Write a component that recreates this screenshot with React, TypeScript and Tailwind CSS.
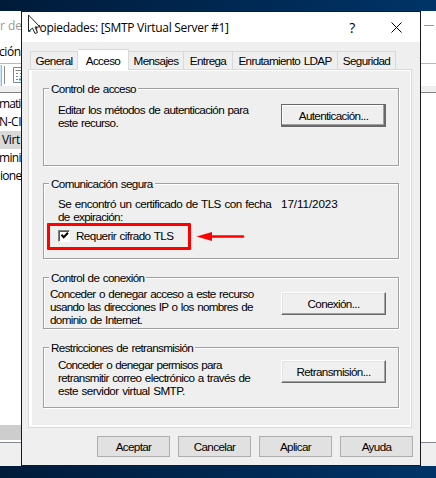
import type { ReactNode } from "react";

function Background() {
  return (
    <div className="flex h-[455px] flex-col bg-white font-['Open_Sans','Noto_Sans',sans-serif] text-[12px] leading-[18px] tracking-[-0.4px]">
      <div className="flex h-[29px] items-center justify-between text-[#999]">
        <span className="tracking-normal whitespace-nowrap">r de</span>
        <span className="mr-[2px] h-px w-[10px] bg-[#999]" />
      </div>
      <div className="-ml-px h-[23px] leading-[24px] whitespace-nowrap">ción</div>
      <div className="flex h-[23px] items-center border-t border-[#b5b7c3]">
        <span className="h-[21px] w-[2px] border-r border-[#7ebdf0] bg-[#cce8ff]" />
        <span className="ml-[2px] h-[18px] w-px bg-[#8a8a8a]" />
        <svg className="ml-[8px]" width="14" height="16" viewBox="0 0 14 16" fill="none" stroke="#7b8790">
          <path d="M.5 .5h13v15H.5z" />
          <path d="M2.500 3.500h9M3 6.500h2M7 6.500h5M3 9.500h2M7 9.500h5M3 12.500h2" />
          <path d="M6 12.500h6" stroke="#00a8e8" strokeWidth="2" />
        </svg>
      </div>
      <div className="h-[7px] border-b border-[#828282] bg-[#efefef]" />
      <div className="h-[332px] pt-[2px]">
        <div className="-ml-px h-[18px] tracking-[-0.9px] whitespace-nowrap">matic</div>
        <div className="-ml-px h-[18px] whitespace-nowrap">N-CI</div>
        <div className="h-[18px] w-[21px] bg-[#d9d9d9] pl-[2px] whitespace-nowrap">Virt</div>
        <div className="-ml-px h-[18px] tracking-[-0.7px] whitespace-nowrap">mini</div>
        <div className="h-[18px] tracking-[-0.7px] whitespace-nowrap">ione</div>
      </div>
      <div className="h-[15px] w-[21px] bg-[#cdcdcd]" />
      <div className="mt-[2px] h-[24px] border-t border-[#828790] bg-[#efefef]" />
    </div>
  );
}

function Group({ title, className, children }: { title: ReactNode; className: string; children: ReactNode }) {
  return (
    <section
      className={
        "ml-[14px] w-[356px] border border-[#a0a0a0] shadow-[1px_1px_0_#fff,inset_1px_1px_0_#fff] " + className
      }
    >
      <div className="-mt-[7px] ml-[5px] flex h-[14px]">
        <h2 className="bg-[#efefef] px-[2px]">{title}</h2>
      </div>
      {children}
    </section>
  );
}

function PushButton({ children, focused }: { children: ReactNode; focused?: boolean }) {
  return (
    <button
      className={
        "h-[23px] w-[105px] shrink-0 border border-r-[#696969] border-b-[#696969] bg-[#efefef] " +
        (focused
          ? "border-t-[#696969] border-l-[#696969] shadow-[inset_-1px_-1px_0_#696969,inset_-2px_-2px_0_#a0a0a0,inset_1px_1px_0_#fff]"
          : "border-t-white border-l-white shadow-[inset_-1px_-1px_0_#a0a0a0,inset_1px_1px_0_#e3e3e3]")
      }
    >
      {children}
    </button>
  );
}

function Tab({ className, children }: { className: string; children: ReactNode }) {
  return (
    <div className={"flex h-[18px] items-center justify-center border-t border-r border-[#d9d9d9] " + className}>
      {children}
    </div>
  );
}

function FooterButton({ children }: { children: ReactNode }) {
  return <button className="h-[21px] w-[73px] border border-[#adadad] bg-[#e1e1e1]">{children}</button>;
}

function Dialog() {
  return (
    <div className="absolute top-[11px] left-[21px] h-[455px] w-[400px] border border-[#1a1a1a] bg-[#efefef] font-['Liberation_Sans',sans-serif] text-[11.7px] leading-[13px] tracking-[-0.65px] [word-spacing:0.9px] whitespace-nowrap text-black">
      <header className="flex h-[30px] items-center bg-white pl-[6px] font-['Open_Sans','Noto_Sans',sans-serif] text-[12px] tracking-[-0.3px] [word-spacing:0px]">
        <span>Propiedades: [SMTP Virtual Server #1]</span>
        <span className="ml-auto text-[14px]">?</span>
        <svg className="mr-[18px] ml-[36px]" width="11" height="11" viewBox="0 0 11 11" stroke="#000">
          <path d="M.5 .5l10 10M10.500 .5l-10 10" />
        </svg>
      </header>
      <nav className="flex h-[27px] items-end pl-[8px]">
        <Tab className="w-[48px] border-l">General</Tab>
        <div className="z-10 -mb-px flex h-[21px] w-[51px] items-center justify-center border-t border-r border-[#d9d9d9] bg-white">
          Acceso
        </div>
        <Tab className="w-[55px]">Mensajes</Tab>
        <Tab className="w-[49px]">Entrega</Tab>
        <Tab className="w-[105px]">Enrutamiento LDAP</Tab>
        <Tab className="w-[58px]">Seguridad</Tab>
      </nav>
      <main className="ml-[6px] h-[359px] w-[384px] border border-[#d9d9d9] shadow-[inset_3px_0_0_#fff,inset_-1px_-2px_0_#fff,inset_0_1px_0_#fff]">
        <Group title="Control de acceso" className="mt-[18px] h-[78px]">
          <div className="flex justify-between pr-[12px] pl-[14px]">
            <p className="mt-[7px]">
              <span className="block">Editar los métodos de autenticación para</span>
              <span className="block">este recurso.</span>
            </p>
            <div className="mt-[8px]">
              <PushButton focused>Autenticación...</PushButton>
            </div>
          </div>
        </Group>
        <Group title="Comunicación segura" className="mt-[17px] h-[76px]">
          <div className="flex pl-[14px]">
            <p className="mt-[6px] w-[223px]">
              <span className="block tracking-[-0.55px]">Se encontró un certificado de TLS con fecha</span>
              <span className="block">de expiración:</span>
            </p>
            <span className="mt-[6px] tracking-[-0.1px]">17/11/2023</span>
          </div>
          <label className="mt-[6px] flex items-center pl-[14px]">
            <span className="flex h-[12px] w-[12px] items-center justify-center border border-t-[#808080] border-r-white border-b-white border-l-[#808080] bg-white shadow-[inset_1px_1px_0_#555]">
              <svg width="9" height="9" viewBox="0 0 9 9" fill="none" stroke="#000" strokeWidth="2">
                <path d="M1.500 3.800l2.200 2.400L8 1.800" />
              </svg>
            </span>
            <span className="ml-[6px] tracking-[-0.6px]">Requerir cifrado TLS</span>
          </label>
        </Group>
        <Group title="Control de conexión" className="mt-[18px] h-[52px]">
          <div className="flex justify-between pr-[12px] pl-[6px]">
            <p className="mt-[2px]">
              <span className="block">Conceder o denegar acceso a este recurso</span>
              <span className="block tracking-[-0.7px]">usando las direcciones IP o los nombres de</span>
              <span className="block">dominio de Internet.</span>
            </p>
            <div className="mt-[7px]">
              <PushButton>Conexión...</PushButton>
            </div>
          </div>
        </Group>
        <Group title="Restricciones de retransmisión" className="mt-[18px] h-[61px]">
          <div className="flex justify-between pr-[12px] pl-[14px]">
            <p className="mt-[3px]">
              <span className="block tracking-[-0.74px]">Conceder o denegar permisos para</span>
              <span className="block">retransmitir correo electrónico a través de</span>
              <span className="block tracking-[-0.55px]">este servidor virtual SMTP.</span>
            </p>
            <div className="mt-[5px]">
              <PushButton>Retransmisión...</PushButton>
            </div>
          </div>
        </Group>
      </main>
      <footer className="mt-[8px] flex justify-end gap-[8px] pr-[7px]">
        <FooterButton>Aceptar</FooterButton>
        <FooterButton>Cancelar</FooterButton>
        <FooterButton>Aplicar</FooterButton>
        <FooterButton>Ayuda</FooterButton>
      </footer>
    </div>
  );
}

export default function App() {
  return (
    <div className="relative h-[478px] w-[436px] overflow-hidden bg-linear-to-r from-[#001b3a] to-[#003468] pt-[11px]">
      <Background />
      <Dialog />
      <div className="absolute top-[223px] left-[47px] h-[27px] w-[144px] rounded-[1px] border-3 border-[#ff0000]" />
      <svg className="absolute top-[231px] left-[196px]" width="50" height="12" viewBox="0 0 50 12">
        <path d="M14 5.500H47" stroke="#f00" strokeWidth="2.600" strokeLinecap="round" />
        <path d="M.5 5.500L16 1v9z" fill="#f00" />
      </svg>
      <svg className="absolute top-[14px] left-[28px]" width="14" height="21" viewBox="0 0 14 21">
        <path d="M.5 1v16.500l4-3.500 2.500 5.500 2.500-1-2.500-5.500h5z" fill="#fff" stroke="#222" />
      </svg>
    </div>
  );
}
